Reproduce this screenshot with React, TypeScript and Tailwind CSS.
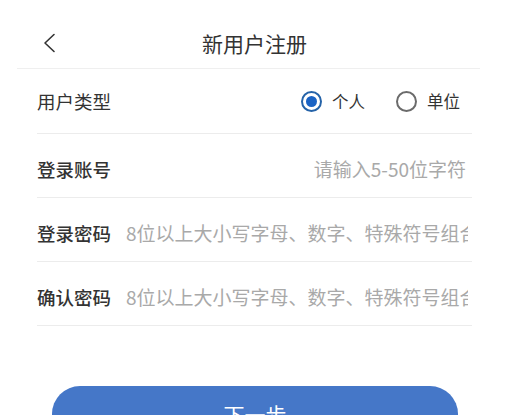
import React from "react";

const font = { fontFamily: '"Noto Sans CJK SC", "Noto Sans", sans-serif' };

function Radio({ checked, label }: { checked: boolean; label: string }) {
  return (
    <div className="flex items-center gap-[10px]">
      <div
        className={
          checked
            ? "w-[21px] h-[21px] rounded-full border-[2.5px] border-[#2563a8] flex items-center justify-center"
            : "w-[21px] h-[21px] rounded-full border-[2px] border-[#6b6b6b] flex items-center justify-center"
        }
      >
        {checked && <div className="w-[11px] h-[11px] rounded-full bg-[#1a63c4]" />}
      </div>
      <span className="text-[16.5px] text-[#333333] leading-none">{label}</span>
    </div>
  );
}

export default function App() {
  return (
    <div className="w-[522px] h-[415px] bg-white overflow-hidden" style={font}>
      {/* Header */}
      <div className="ml-[17px] w-[463px] h-[69px] pt-[18px] border-b border-[#efefef] flex items-center">
        <div className="w-[50px] h-full flex items-center pl-[25px]">
          <svg width="14" height="20" viewBox="0 0 14 20" fill="none">
            <path d="M12 1.5 L3 10 L12 18.5" stroke="#333" strokeWidth="1.6" strokeLinecap="round" strokeLinejoin="round" />
          </svg>
        </div>
        <div className="flex-1 text-center text-[21px] text-[#333333] leading-none">新用户注册</div>
        <div className="w-[38px]" />
      </div>

      {/* Form */}
      <div className="ml-[37px] w-[435px]">
        <div className="h-[65px] border-b border-[#ececec] flex items-center justify-between">
          <span className="text-[18.5px] text-[#333333] leading-none">用户类型</span>
          <div className="flex items-center gap-[31px] pr-[12px]">
            <Radio checked label="个人" />
            <Radio checked={false} label="单位" />
          </div>
        </div>
        <div className="h-[64px] border-b border-[#ececec] flex items-center pt-[8px]">
          <span className="text-[18.5px] font-medium text-[#333333] leading-none shrink-0">登录账号</span>
          <input
            className="flex-1 min-w-0 text-right pr-[6px] text-[19px] outline-none bg-transparent placeholder:text-[#a9a9a9]"
            placeholder="请输入5-50位字符"
            style={font}
          />
        </div>
        <div className="h-[64px] border-b border-[#ececec] flex items-center pt-[8px]">
          <span className="text-[18.5px] font-medium text-[#333333] leading-none shrink-0">登录密码</span>
          <input
            className="flex-1 min-w-0 ml-[15px] mr-[4px] text-[19px] outline-none bg-transparent placeholder:text-[#a9a9a9]"
            placeholder="8位以上大小写字母、数字、特殊符号组合"
            style={font}
          />
        </div>
        <div className="h-[64px] border-b border-[#ececec] flex items-center pt-[8px]">
          <span className="text-[18.5px] font-medium text-[#333333] leading-none shrink-0">确认密码</span>
          <input
            className="flex-1 min-w-0 ml-[15px] mr-[4px] text-[19px] outline-none bg-transparent placeholder:text-[#a9a9a9]"
            placeholder="8位以上大小写字母、数字、特殊符号组合"
            style={font}
          />
        </div>
      </div>

      {/* Button */}
      <div className="mt-[60px] ml-[52px] w-[406px]">
        <button
          className="w-full h-[56px] rounded-full bg-[#4577c8] text-white text-[21px] leading-none flex items-center justify-center"
          style={font}
        >
          下一步
        </button>
      </div>
    </div>
  );
}
